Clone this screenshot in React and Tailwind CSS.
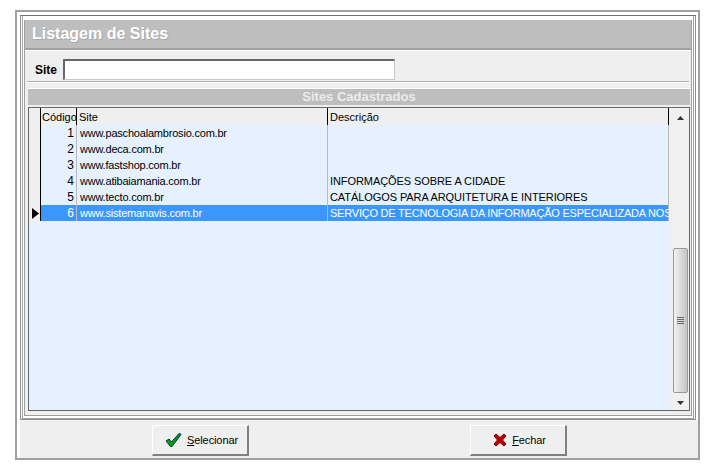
const rows = [
  { id: 1, site: "www.paschoalambrosio.com.br", desc: "" },
  { id: 2, site: "www.deca.com.br", desc: "" },
  { id: 3, site: "www.fastshop.com.br", desc: "" },
  { id: 4, site: "www.atibaiamania.com.br", desc: "INFORMAÇÕES SOBRE A CIDADE" },
  { id: 5, site: "www.tecto.com.br", desc: "CATÁLOGOS PARA ARQUITETURA E INTERIORES" },
  { id: 6, site: "www.sistemanavis.com.br", desc: "SERVIÇO DE TECNOLOGIA DA INFORMAÇÃO ESPECIALIZADA NOS" },
];

function Row({ row }) {
  const selected = row.id === 6;
  return (
    <div className={`flex h-4 leading-[17px] ${selected ? "bg-[#3c96ff] text-white" : "text-black"}`}>
      <div className="w-3 shrink-0 border-r border-black bg-[#efefef] flex items-center pl-[3px]">
        {selected && (
          <svg width="7" height="11" viewBox="0 0 7 11">
            <path d="M0 0 L7 5.5 L0 11 Z" fill="#000" />
          </svg>
        )}
      </div>
      <div className="w-9 shrink-0 border-r border-[#b8b8b8] text-right pr-[2px] text-[12px]">{row.id}</div>
      <div className="w-[251px] shrink-0 border-r border-[#b8b8b8] pl-[3px] tracking-[-0.2px]">{row.site}</div>
      <div className={`w-[341px] shrink-0 border-r border-[#b8b8b8] pl-[2px] whitespace-nowrap ${selected ? "tracking-[-0.22px]" : "tracking-[-0.08px]"}`}>{row.desc}</div>
    </div>
  );
}

function Scrollbar() {
  return (
    <div className="w-5 shrink-0 bg-[#f0f0f0] flex flex-col items-center">
      <div className="h-[140px] w-full flex justify-center pt-2">
        <svg width="7" height="4" viewBox="0 0 7 4" className="ml-[2px]">
          <path d="M3.5 0 L7 4 L0 4 Z" fill="#333" />
        </svg>
      </div>
      <div className="h-[145px] w-[15px] ml-[3px] rounded-[2px] border border-[#999] bg-linear-to-r from-[#f2f2f2] to-[#c4c4c4] flex flex-col items-center justify-center gap-px">
        <div className="h-px w-[7px] bg-[#666]" />
        <div className="h-px w-[7px] bg-[#666]" />
        <div className="h-px w-[7px] bg-[#666]" />
        <div className="h-px w-[7px] bg-[#666]" />
      </div>
      <div className="flex-1 w-full flex justify-center pt-2">
        <svg width="7" height="4" viewBox="0 0 7 4" className="ml-[2px]">
          <path d="M0 0 L7 0 L3.5 4 Z" fill="#333" />
        </svg>
      </div>
    </div>
  );
}

function ActionButton({ icon, hotkey, rest }) {
  return (
    <button className="h-[31px] w-[97px] flex items-center justify-center gap-[5px] pl-[3px] bg-[#efefef] border-t border-l border-white border-r-2 border-b-2 border-r-[#808080] border-b-[#808080] text-black text-[11px] tracking-[-0.1px]">
      {icon}
      <span>
        <span className="underline">{hotkey}</span>
        {rest}
      </span>
    </button>
  );
}

const checkIcon = (
  <svg width="17" height="16" viewBox="0 0 17 16">
    <path d="M1 9 L4 7 L6.5 10 L14.5 1 L16 2.5 L7 14.5 L5.5 14.5 Z" fill="#00a000" stroke="#003060" strokeWidth="1" strokeLinejoin="round" />
  </svg>
);

const closeIcon = (
  <svg width="14" height="14" viewBox="0 0 14 14">
    <path d="M1 3 L3 1 L7 4.5 L11 1 L13 3 L9.5 7 L13 11 L11 13 L7 9.5 L3 13 L1 11 L4.5 7 Z" fill="#c00000" stroke="#700000" strokeWidth="1" strokeLinejoin="round" />
  </svg>
);

export default function App() {
  return (
    <div className="w-[718px] h-[473px] bg-white pt-[10px] pl-[15px] text-[11px] font-['Liberation_Sans',Arial,sans-serif]">
      <div className="w-[685px] h-[450px] border-2 border-[#a0a0a0] bg-white flex flex-col pt-[3px] pl-[3px]">
        {/* nested frame */}
        <div className="w-[676px] h-[405px] shrink-0 border border-[#909090] border-t-[#707070] pl-px pr-px bg-white">
          <div className="h-full border-l border-r border-b border-[#a0a0a0] pl-px pr-px pb-[2px] pt-[4px]">
            <div className="h-full border-l border-r border-b border-[#a0a0a0] flex flex-col bg-[#efefef]">
              <div className="h-[30px] shrink-0 bg-[#bebebe] border-b-2 border-[#a0a0a0] pl-[7px] flex items-center text-white font-bold text-[16px] [text-shadow:1px_1px_0_#a8a8a8]">
                Listagem de Sites
              </div>
              <div className="h-px shrink-0 bg-white" />
              <div className="h-[31px] shrink-0 mx-[2px] border-b border-[#b0b0b0] flex items-center pl-2 pt-[7px] text-[12px]">
                <span className="font-bold w-7 text-black">Site</span>
                <div className="w-[332px] h-[21px] bg-white border-t-2 border-l-2 border-t-[#666] border-l-[#666] border-r border-b border-r-[#c8c8c8] border-b-[#c8c8c8]" />
              </div>
              <div className="h-[7px] shrink-0 mx-[2px] border-t border-white border-b" />
              <div className="ml-[3px] mr-px h-4 shrink-0 bg-[#bebebe] text-center leading-4 text-[13px] text-[#ececec] font-bold">Sites Cadastrados</div>
              <div className="h-[2px] shrink-0" />
              <div className="ml-[3px] w-[662px] h-[304px] shrink-0 border border-[#666] flex bg-[#e6f1ff]">
                <div className="flex-1 min-w-0 flex flex-col">
                  <div className="flex h-[17px] leading-[18px] bg-[#efefef] text-black shrink-0">
                    <div className="w-3 shrink-0 border-r border-black" />
                    <div className="w-9 shrink-0 border-r border-black pl-px">Código</div>
                    <div className="w-[251px] shrink-0 border-r border-black pl-[2px]">Site</div>
                    <div className="w-[341px] shrink-0 border-r border-black pl-[2px]">Descrição</div>
                  </div>
                  {rows.map((row) => (
                    <Row key={row.id} row={row} />
                  ))}
                </div>
                <Scrollbar />
              </div>
            </div>
          </div>
        </div>
        <div className="flex-1 bg-[#efefef] flex pl-[132px] pt-[5px] gap-[221px]">
          <ActionButton icon={checkIcon} hotkey="S" rest="elecionar" />
          <ActionButton icon={closeIcon} hotkey="F" rest="echar" />
        </div>
      </div>
    </div>
  );
}
